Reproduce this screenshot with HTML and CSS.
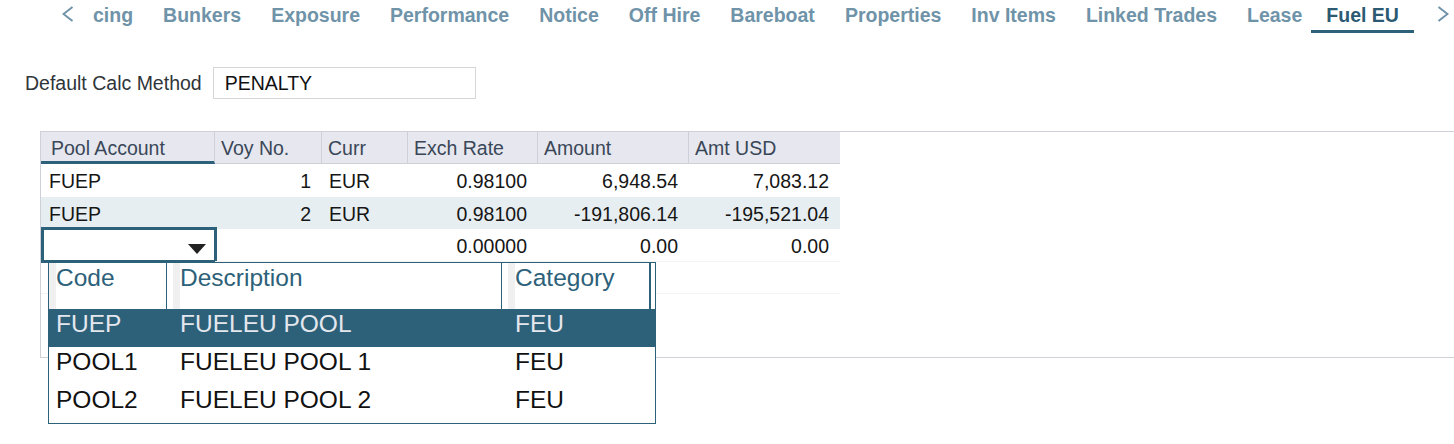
FILE: index.html
```html
<!DOCTYPE html>
<html lang="en">
<head>
<meta charset="utf-8">
<title>Fuel EU</title>
<link rel="stylesheet" href="styles.css">
</head>
<body>
<nav class="tabbar">
  <span class="chev chev-left"><svg width="12" height="30" viewBox="0 0 12 30"><polyline points="10.5,7 1.5,14 10.5,21" fill="none" stroke="#6f93a8" stroke-width="2"/></svg></span>
  <div class="tabs">
    <span class="tab">cing</span>
    <span class="tab">Bunkers</span>
    <span class="tab">Exposure</span>
    <span class="tab">Performance</span>
    <span class="tab">Notice</span>
    <span class="tab">Off Hire</span>
    <span class="tab">Bareboat</span>
    <span class="tab">Properties</span>
    <span class="tab">Inv Items</span>
    <span class="tab">Linked Trades</span>
    <span class="tab">Lease</span>
    <span class="tab active">Fuel EU</span>
  </div>
  <span class="chev chev-right"><svg width="12" height="30" viewBox="0 0 12 30"><polyline points="1.5,7 10.5,14 1.5,21" fill="none" stroke="#6f93a8" stroke-width="2"/></svg></span>
</nav>

<div class="form-row">
  <label class="form-label">Default Calc Method</label>
  <div class="form-input">PENALTY</div>
</div>

<div class="grid-wrap">
  <div class="grid">
    <div class="hcell first sorted">Pool Account</div>
    <div class="hcell">Voy No.</div>
    <div class="hcell">Curr</div>
    <div class="hcell">Exch Rate</div>
    <div class="hcell">Amount</div>
    <div class="hcell last">Amt USD</div>

    <div class="cell first">FUEP</div>
    <div class="cell num">1</div>
    <div class="cell">EUR</div>
    <div class="cell num">0.98100</div>
    <div class="cell num">6,948.54</div>
    <div class="cell num">7,083.12</div>

    <div class="cell first alt">FUEP</div>
    <div class="cell num alt">2</div>
    <div class="cell alt">EUR</div>
    <div class="cell num alt">0.98100</div>
    <div class="cell num alt">-191,806.14</div>
    <div class="cell num alt">-195,521.04</div>

    <div class="cell first lined"><div class="editor"><svg width="18" height="10" viewBox="0 0 18 10"><polygon points="0,0 18,0 9,10" fill="#222"/></svg></div></div>
    <div class="cell num lined"></div>
    <div class="cell lined"></div>
    <div class="cell num lined">0.00000</div>
    <div class="cell num lined">0.00</div>
    <div class="cell num lined">0.00</div>

    <div class="cell first lined"></div>
    <div class="cell lined"></div>
    <div class="cell lined"></div>
    <div class="cell lined"></div>
    <div class="cell lined"></div>
    <div class="cell lined"></div>
  </div>

  <div class="popup">
    <div class="ph c1"><span class="ph-lbl">Code</span></div>
    <div class="ph c2"><span class="ph-lbl">Description</span></div>
    <div class="ph c3"><span class="ph-lbl">Category</span></div>
    <div class="ph-end"></div>

    <div class="pr sel p1">FUEP</div>
    <div class="pr sel p2">FUELEU POOL</div>
    <div class="pr sel p3">FEU</div>
    <div class="pr sel"></div>

    <div class="pr p1">POOL1</div>
    <div class="pr p2">FUELEU POOL 1</div>
    <div class="pr p3">FEU</div>
    <div class="pr"></div>

    <div class="pr p1">POOL2</div>
    <div class="pr p2">FUELEU POOL 2</div>
    <div class="pr p3">FEU</div>
    <div class="pr"></div>
  </div>
</div>
</body>
</html>
```

FILE: styles.css
```css
* { box-sizing: border-box; }

body {
  margin: 0;
  background: #ffffff;
  font-family: "Liberation Sans", Arial, sans-serif;
  color: #1a1a1a;
  width: 1454px;
  height: 444px;
  overflow: hidden;
}

/* Tabs */
.tabbar {
  display: flex;
  align-items: flex-start;
  height: 33px;
  padding-left: 62px;
}
.chev {
  display: block;
  height: 30px;
}
.chev svg { display: block; }
.chev-left { width: 16px; }
.chev-right {
  margin-left: auto;
  width: 30px;
  padding-left: 13px;
}
.tabs {
  display: flex;
  flex: 1;
  overflow: hidden;
  white-space: nowrap;
}
.tab {
  display: block;
  padding: 0 15px;
  font-size: 19.5px;
  font-weight: bold;
  line-height: 30px;
  height: 33px;
  color: #6f93a8;
  border-bottom: 3px solid transparent;
}
.tab.active {
  margin-left: -6px;
  color: #2b5a72;
  border-bottom-color: #2d6179;
}

/* Form */
.form-row {
  display: flex;
  align-items: center;
  margin-top: 34px;
  padding-left: 25px;
  height: 32px;
}
.form-label {
  font-size: 19.5px;
  color: #30353a;
  padding-top: 1px;
}
.form-input {
  margin-left: 11px;
  width: 263px;
  height: 32px;
  border: 1px solid #d6d6d6;
  padding: 1px 11px 0;
  font-size: 19.5px;
  line-height: 29px;
  color: #111;
}

/* Grid */
.grid-wrap {
  position: relative;
  margin-top: 32px;
  margin-left: 40px;
  width: 1420px;
  height: 227px;
  border: 1px solid #cfd1d9;
  border-right: none;
}
.grid {
  display: grid;
  grid-template-columns: 174px 107px 86px 130px 151px 151px;
  grid-auto-rows: 32.5px;
  grid-template-rows: 32px;
  width: 799px;
}
.hcell {
  background: #e6e7ef;
  border-right: 1px solid #cdd0d9;
  border-bottom: 1px solid #cdd0d9;
  font-size: 19.5px;
  color: #3a4758;
  line-height: 28px;
  padding: 2px 0 0 6px;
  white-space: nowrap;
}
.hcell.first { padding-left: 10px; }
.hcell.last { border-right: none; }
.hcell.sorted {
  border-bottom: 3px solid #2d6179;
  border-right-color: #cdd0d9;
}
.cell {
  font-size: 19.5px;
  line-height: 30px;
  padding: 2px 0 0 7px;
  color: #161616;
  white-space: nowrap;
}
.cell.first { padding-left: 8px; }
.cell.num {
  text-align: right;
  padding-left: 0;
  padding-right: 11px;
}
.cell.alt { background: #e7eef1; }
.cell.lined { border-bottom: 1px solid #f3f3f3; }
.cell.first.lined { padding: 0; }

.editor {
  margin-top: -2px;
  width: 176px;
  height: 36px;
  border: 3px solid #2d6179;
  display: flex;
  justify-content: flex-end;
  align-items: flex-start;
  padding: 14px 8px 0 0;
}
.editor svg { display: block; }

/* Dropdown popup */
.popup {
  position: absolute;
  left: 7px;
  top: 130px;
  width: 608px;
  border: 1px solid #2d6179;
  background: #ffffff;
  display: grid;
  grid-template-columns: 118px 335px 149px 4px;
  grid-template-rows: 46px 38px 38px 38px;
  font-size: 24.5px;
}
.ph {
  border-right: 1px solid #2d6179;
  display: flex;
}
.ph.c3 { border-right-width: 2px; }
.ph-lbl {
  display: block;
  border-left: 7px solid #f0f0f0;
  padding-left: 0;
  color: #2d6179;
  line-height: 29px;
  height: 100%;
  flex: 1;
}
.ph.c2 .ph-lbl, .ph.c3 .ph-lbl { margin-left: 6px; }

.pr {
  line-height: 30px;
  color: #111;
  white-space: nowrap;
}
.pr.p1 { padding-left: 7px; }
.pr.p2, .pr.p3 { padding-left: 13px; }
.pr.sel {
  background: #2d6179;
  color: #e4e7ee;
}
```
